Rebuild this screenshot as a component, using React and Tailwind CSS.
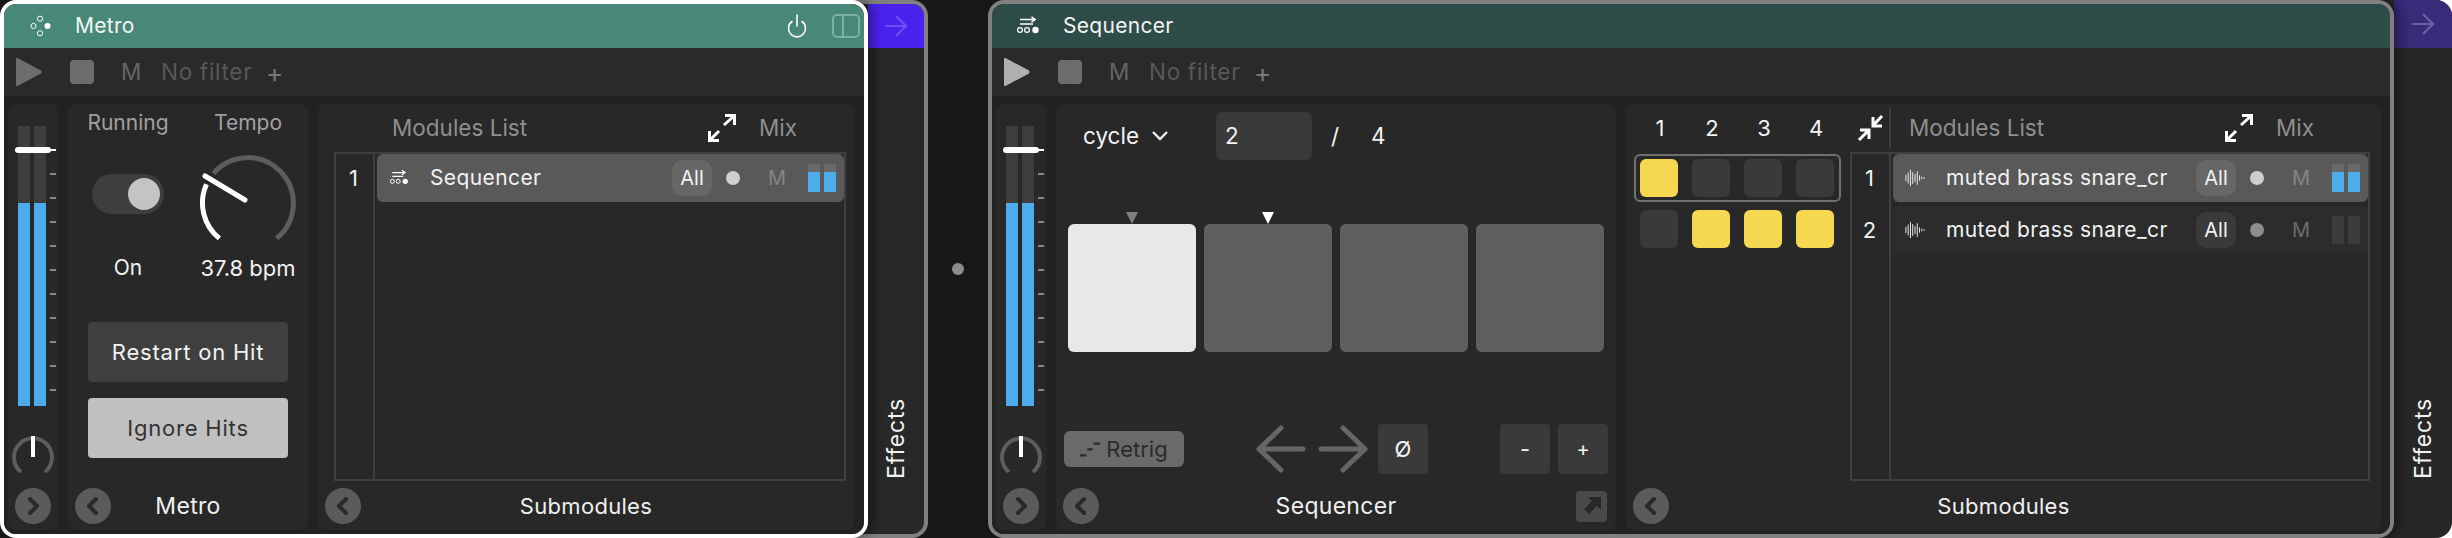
import React from "react";

const Chevron = ({ dir = "left" }) => (
  <div className="flex h-[36px] w-[36px] items-center justify-center rounded-full bg-[#5b5b5b]">
    <svg width="16" height="20" viewBox="0 0 16 20" fill="none" stroke="#2a2a2a" strokeWidth="4" strokeLinecap="round" strokeLinejoin="round">
      {dir === "left" ? <path d="M11 3 L4 10 L11 17" /> : <path d="M5 3 L12 10 L5 17" />}
    </svg>
  </div>
);

const MetroIcon = () => (
  <svg width="24" height="24" viewBox="0 0 24 24" fill="none" stroke="#fff" strokeWidth="1">
    <circle cx="12" cy="4.7" r="2.6" />
    <circle cx="5.5" cy="12" r="2.6" />
    <circle cx="12" cy="19.3" r="2.6" />
    <circle cx="19.5" cy="12" r="3" fill="#fff" stroke="none" />
  </svg>
);

const SeqIcon = ({ w = 24, h = 20 }) => (
  <svg width={w} height={h} viewBox="0 0 24 20" fill="none" stroke="#fff" strokeWidth="1.2">
    <path d="M4 3.5 H19 M15.5 0.8 L19.2 3.5 L15.5 6.2" strokeWidth="1.5" />
    <path d="M4 8 H17" strokeWidth="1.5" />
    <circle cx="4" cy="14" r="2.4" />
    <circle cx="11" cy="14" r="2.4" />
    <circle cx="19.5" cy="14" r="3.2" fill="#fff" stroke="none" />
  </svg>
);

const WaveIcon = () => (
  <svg width="22" height="20" viewBox="0 0 22 20" stroke="#e8e8e8" strokeWidth="1.1" strokeLinecap="round">
    <path d="M1 7 V13 M3.5 4.5 V15.5 M6 1.5 V18.5 M8.5 4 V16 M11 6 V14 M13.5 3 V17 M16 7.5 V12.5 M18.5 9 V11 M21 9.5 V10.5" />
  </svg>
);

const Expand = () => (
  <svg width="30" height="30" viewBox="0 0 30 30" fill="none" stroke="#fff" strokeWidth="3">
    <path d="M17 12 L27 3 M18 2.5 H27.5 V12" />
    <path d="M12 18 L3 27 M2.5 18 V27.5 H12" />
  </svg>
);

const Compress = () => (
  <svg width="28" height="28" viewBox="0 0 28 28" fill="none" stroke="#fff" strokeWidth="3">
    <path d="M25 2 L16.5 11 M16 3 V12 H25" />
    <path d="M2 26 L11 17 M3 16 H12 V25" />
  </svg>
);

const Meter = () => {
  const ticks = Array.from({ length: 11 }, (_, i) => i);
  return (
    <div className="relative ml-[10px] mt-[22px] flex h-[280px]">
      <div className="relative h-full w-[12px] overflow-hidden bg-[#3d3d3d]">
        <div className="mt-[77px] h-[203px] bg-[#4eabec]" />
      </div>
      <div className="relative ml-[4px] h-full w-[12px] overflow-hidden bg-[#3d3d3d]">
        <div className="mt-[77px] h-[203px] bg-[#4eabec]" />
      </div>
      <div className="ml-[4px] flex flex-col gap-[22px] pt-[23px]">
        {ticks.map((t) => (
          <div key={t} className="h-[2px] w-[6px] bg-[#8a8a8a]" />
        ))}
      </div>
      <div className="absolute left-[-3px] top-[21px] h-[6px] w-[36px] rounded-full bg-white" />
      <div className="absolute left-[32px] top-[23px] h-[2px] w-[6px] bg-white" />
    </div>
  );
};

const Mixer = () => (
  <div className="flex h-full w-[50px] shrink-0 flex-col rounded-lg bg-[#282828]">
    <Meter />
    <svg className="ml-[2px] mt-[28px]" width="46" height="46" viewBox="0 0 46 46" fill="none">
      <path d="M11 38 A19 19 0 1 1 35 38" stroke="#5d5d5d" strokeWidth="4" />
      <rect x="21" y="2" width="4" height="21" fill="#fff" />
    </svg>
    <div className="ml-[7px] mt-[8px]">
      <Chevron dir="right" />
    </div>
  </div>
);

const Footer = ({ label, corner, small }) => (
  <div className="mb-[6px] mt-auto grid h-[36px] grid-cols-[1fr_auto_1fr] items-center px-[7px]">
    <Chevron />
    <span className={`tracking-[0.3px] text-[#f0f0f0] ${small ? "text-[22px]" : "text-[23px]"}`}>{label}</span>
    {corner ? (
      <div className="mr-[2px] flex h-[31px] w-[31px] items-center justify-center justify-self-end rounded-[4px] bg-[#4a4a4a]">
        <svg width="22" height="22" viewBox="0 0 22 22" fill="#282828">
          <path d="M7 2 H20 V15 L16 11 L8 19 L3 14 L11 6 Z" />
        </svg>
      </div>
    ) : (
      <span />
    )}
  </div>
);

const Row = ({ icon, name, active, on }) => (
  <div className={`flex h-[48px] items-center rounded-md pl-[12px] pr-[8px] ${active ? "bg-[#595959]" : "bg-[#2c2c2c]"}`}>
    <div className="flex w-[20px] items-center justify-center">{icon}</div>
    <span className="ml-[21px] flex-1 text-[21px] tracking-[0.4px] text-[#f2f2f2]">{name}</span>
    <div className={`flex h-[36px] w-[40px] items-center justify-center rounded-[10px] text-[20px] text-[#f2f2f2] ${active ? "bg-[#676767]" : "bg-[#3a3a3a]"}`}>All</div>
    <div className={`ml-[14px] h-[14px] w-[14px] rounded-full ${active ? "bg-[#cfcfcf]" : "bg-[#8e8e8e]"}`} />
    <span className={`ml-[27px] w-[20px] text-center text-[20px] ${active ? "text-[#858585]" : "text-[#6c6c6c]"}`}>M</span>
    <div className="ml-[21px] flex h-[28px] gap-[4px]">
      {[0, 1].map((i) => (
        <div key={i} className={`h-full w-[12px] ${active ? "bg-[#6a6a6a]" : "bg-[#3c3c3c]"}`}>
          {on && <div className="mt-[8px] h-[20px] bg-[#4eabec]" />}
        </div>
      ))}
    </div>
  </div>
);

const ListGrid = ({ rows }) => (
  <div className="flex h-[329px] border-2 border-[#3f3f3f]">
    <div className="flex w-[39px] shrink-0 flex-col gap-[4px] border-r-2 border-[#3f3f3f]">
      {rows.map((r, i) => (
        <div key={i} className="flex h-[48px] items-center justify-center pr-[2px] text-[22px] text-[#f2f2f2]">{i + 1}</div>
      ))}
    </div>
    <div className="flex flex-1 flex-col gap-[4px] pl-[2px]">{rows}</div>
  </div>
);

const Device = ({ title, icon, left, border, header, play, children, width }) => (
  <div className={`relative z-10 flex h-[538px] shrink-0 flex-col overflow-hidden rounded-[16px] border-4 shadow-[6px_0_10px_rgba(0,0,0,0.35)] ${border} ${width}`}>
    <div className={`flex h-[44px] shrink-0 items-center ${header}`}>
      <div className="ml-[21px] flex w-[29px] justify-center">{icon}</div>
      <span className="ml-[21px] text-[21px] tracking-[0.3px] text-[#f4f4f4]">{title}</span>
      {left && (
        <div className="ml-auto flex items-center">
          <svg width="22" height="26" viewBox="0 0 22 26" fill="none" stroke="#fff" strokeWidth="1.6" strokeLinecap="round">
            <path d="M11 2 V13" />
            <path d="M6 8.5 A8.5 8.5 0 1 0 16 8.5" />
          </svg>
          <svg className="ml-[24px] mr-[4px]" width="28" height="24" viewBox="0 0 28 24" fill="none" stroke="#7db0a4" strokeWidth="2">
            <rect x="1" y="1" width="26" height="22" rx="4" />
            <path d="M11 1 V23" />
          </svg>
        </div>
      )}
    </div>
    <div className="flex h-[48px] shrink-0 items-center bg-[#2a2a2a] text-[22.5px]">
      <svg className="ml-[12px]" width="26" height="30" viewBox="0 0 26 30">
        <path d="M1.5 1 L25 13.5 Q26 15 25 16.5 L1.5 29 Q0 29.5 0 28 V2 Q0 0.5 1.5 1 Z" fill={play} />
      </svg>
      <div className="ml-[28px] h-[24px] w-[24px] rounded-[4px] bg-[#6c6c6c]" />
      <span className="ml-[27px] w-[20px] text-center text-[#666]">M</span>
      <span className="ml-[20px] w-[90px] whitespace-nowrap tracking-[0.7px] text-[#585858]">No filter</span>
      <span className="ml-[15px] text-[26px] text-[#787878]">+</span>
    </div>
    <div className="flex min-h-0 flex-1 gap-[10px] bg-[#222222] px-[4px] py-[8px] pb-[4px]">{children}</div>
  </div>
);

const EffectsTab = ({ first }) => (
  <div className={`flex h-[538px] shrink-0 flex-col overflow-hidden rounded-r-[16px] pl-[14px] ${first ? "-ml-[14px] w-[74px] border-4 border-l-0 border-[#808080] bg-[#282828]" : "w-[72px] bg-[#272727]"}`}>
    <div className={`flex shrink-0 items-center justify-center ${first ? "h-[44px] bg-[#4a22ee]" : "h-[48px] bg-[#392a7a]"}`}>
      <svg width="24" height="26" viewBox="0 0 24 26" fill="none" stroke={first ? "#6e4ff2" : "#6d60a6"} strokeWidth="2.2">
        <path d="M1 13 H22 M12 3 L22 13 L12 23" />
      </svg>
    </div>
    <div className="flex flex-1 justify-center">
      <span className="mt-[350px] rotate-180 self-start whitespace-nowrap text-[23px] tracking-[0.8px] text-[#f2f2f2] [writing-mode:vertical-rl]">Effects</span>
    </div>
  </div>
);

const MetroMain = () => (
  <div className="flex h-full w-[240px] shrink-0 flex-col rounded-lg bg-[#282828]">
    <div className="mt-[7px] grid grid-cols-2 justify-items-center text-[21px]">
      <div className="flex flex-col items-center">
        <span className="h-[24px] leading-[24px] text-[#a0a0a0]">Running</span>
        <div className="mt-[39px] flex h-[40px] w-[72px] items-center justify-end rounded-full bg-[#3e3e3e] pr-[4px]">
          <div className="h-[32px] w-[32px] rounded-full bg-[#c4c4c4]" />
        </div>
        <span className="mt-[42px] h-[24px] leading-[24px] text-[#f2f2f2]">On</span>
      </div>
      <div className="flex flex-col items-center">
        <span className="h-[24px] leading-[24px] text-[#a0a0a0]">Tempo</span>
        <svg className="mt-[18px]" width="100" height="100" viewBox="0 0 100 100" fill="none" strokeWidth="5">
          <path d="M21.4 85.4 A45.5 45.5 0 0 1 8.5 31.3" stroke="#fff" />
          <path d="M15.5 20.3 A45.5 45.5 0 1 1 78.6 85.4" stroke="#5d5d5d" />
          <path d="M7 23 L47 47" stroke="#fff" strokeLinecap="round" />
        </svg>
        <span className="mt-[3px] h-[24px] whitespace-nowrap text-[22px] leading-[24px] text-[#f2f2f2]">37.8 bpm</span>
      </div>
    </div>
    <div className="mx-auto mt-[42px] flex w-[200px] flex-col gap-[16px] text-[22px] tracking-[0.8px]">
      <div className="flex h-[60px] items-center justify-center rounded-[4px] bg-[#3f3f3f] text-[#f2f2f2]">Restart on Hit</div>
      <div className="flex h-[60px] items-center justify-center rounded-[4px] bg-[#c0c0c0] text-[#333]">Ignore Hits</div>
    </div>
    <Footer label="Metro" />
  </div>
);

const SeqMain = () => (
  <div className="flex h-full w-[560px] shrink-0 flex-col rounded-lg bg-[#282828] text-[#f2f2f2]">
    <div className="mt-[8px] flex h-[48px] items-center pl-[27px] text-[22.5px]">
      <span className="w-[56px]">cycle</span>
      <svg className="ml-[12px]" width="18" height="12" viewBox="0 0 18 12" fill="none" stroke="#f2f2f2" strokeWidth="2.4">
        <path d="M2 2 L9 9 L16 2" />
      </svg>
      <div className="ml-[47px] flex h-[48px] w-[96px] items-center rounded-md bg-[#3a3a3a] pl-[9px]">2</div>
      <span className="ml-[17px] w-[12px] text-center">/</span>
      <span className="ml-[30px]">4</span>
    </div>
    <div className="mt-[52px] grid grid-cols-4 gap-[8px] px-[12px]">
      {[0, 1, 2, 3].map((i) => (
        <div key={i} className="flex h-[12px] justify-center">
          {i < 2 && (
            <svg width="12" height="12" viewBox="0 0 12 12">
              <path d="M0 0 H12 L6 12 Z" fill={i === 0 ? "#808080" : "#fff"} />
            </svg>
          )}
        </div>
      ))}
    </div>
    <div className="grid grid-cols-4 gap-[8px] px-[12px]">
      {[0, 1, 2, 3].map((i) => (
        <div key={i} className={`h-[128px] rounded-md ${i === 0 ? "bg-[#e8e8e8]" : "bg-[#5f5f61]"}`} />
      ))}
    </div>
    <div className="mt-[72px] flex h-[50px] items-center px-[8px]">
      <div className="flex h-[36px] w-[120px] items-center justify-center gap-[6px] rounded-md bg-[#6a6a6a] text-[22px] text-[#2c2c2c]">
        <svg width="20" height="18" viewBox="0 0 22 18" stroke="#2c2c2c" strokeWidth="2.4">
          <path d="M0 16 H7 M8 9.5 H14 M15 3 H22" />
        </svg>
        Retrig
      </div>
      <svg className="ml-[72px]" width="50" height="48" viewBox="0 0 50 48" fill="none" stroke="#666" strokeWidth="5" strokeLinecap="round" strokeLinejoin="round">
        <path d="M47 24 H3 M25 3 L3 24 L25 45" />
      </svg>
      <svg className="ml-[12px]" width="50" height="48" viewBox="0 0 50 48" fill="none" stroke="#666" strokeWidth="5" strokeLinecap="round" strokeLinejoin="round">
        <path d="M3 24 H47 M25 3 L47 24 L25 45" />
      </svg>
      <div className="ml-[10px] flex h-[50px] w-[50px] items-center justify-center rounded-[4px] bg-[#3a3a3a] text-[22px]">Ø</div>
      <div className="ml-auto flex h-[50px] w-[50px] items-center justify-center rounded-[4px] bg-[#3a3a3a] text-[22px]">-</div>
      <div className="ml-[8px] flex h-[50px] w-[50px] items-center justify-center rounded-[4px] bg-[#3a3a3a] text-[20px]">+</div>
    </div>
    <Footer label="Sequencer" corner />
  </div>
);

const ListHeader = ({ mixWidth, gutter }) => (
  <div className="flex h-[48px] items-center text-[22.5px] text-[#8f8f8f]">
    {gutter}
    <span className="whitespace-nowrap">Modules List</span>
    <div className="ml-auto flex items-center">
      <Expand />
      <span className={`ml-[22px] ${mixWidth}`}>Mix</span>
    </div>
  </div>
);

const MetroModules = () => (
  <div className="flex h-full w-[536px] shrink-0 flex-col rounded-lg bg-[#282828] pl-[16px] pr-[8px]">
    <ListHeader mixWidth="w-[87px]" gutter={<span className="w-[58px]" />} />
    <ListGrid rows={[<Row key="a" active on icon={<SeqIcon w={22} h={18} />} name="Sequencer" />]} />
    <div className="-ml-[16px] -mr-[8px] mt-auto">
      <Footer label="Submodules" small />
    </div>
  </div>
);

const Pad = ({ on }) => <div className={`h-[38px] w-[38px] rounded-md ${on ? "bg-[#f5d84f]" : "bg-[#3a3a3a]"}`} />;

const SeqModules = () => (
  <div className="flex h-full w-[755px] shrink-0 flex-col rounded-lg bg-[#282828]">
    <div className="flex">
      <div className="w-[224px] shrink-0 pl-[8px]">
        <div className="flex h-[48px] items-center text-[22px] text-[#f2f2f2]">
          {[1, 2, 3, 4].map((n) => (
            <span key={n} className="w-[52px] text-center">{n}</span>
          ))}
        </div>
        <div className="mt-[2px] flex h-[48px] w-[207px] items-center gap-[14px] rounded-md border-2 border-[#707070] pl-[4px]">
          <Pad on /><Pad /><Pad /><Pad />
        </div>
        <div className="ml-[6px] mt-[8px] flex gap-[14px]">
          <Pad /><Pad on /><Pad on /><Pad on />
        </div>
      </div>
      <div className="w-[520px] shrink-0">
        <ListHeader
          mixWidth="w-[94px]"
          gutter={
            <div className="mr-[18px] flex h-[40px] w-[41px] shrink-0 items-center border-r-2 border-[#3f3f3f] pl-[7px]">
              <Compress />
            </div>
          }
        />
        <ListGrid
          rows={[
            <Row key="a" active on icon={<WaveIcon />} name="muted brass snare_cr" />,
            <Row key="b" icon={<WaveIcon />} name="muted brass snare_cr" />,
          ]}
        />
      </div>
    </div>
    <div className="mt-auto">
      <Footer label="Submodules" small />
    </div>
  </div>
);

export default function App() {
  return (
    <div className="flex h-[538px] w-[2452px] overflow-hidden bg-[#181818] [font-family:Inter,sans-serif]">
      <Device width="w-[868px]" left title="Metro" icon={<MetroIcon />} border="border-white" header="bg-[#478878]" play="#6e6e6e">
        <Mixer />
        <MetroMain />
        <MetroModules />
      </Device>
      <EffectsTab first />
      <div className="flex w-[60px] shrink-0 items-center justify-center">
        <div className="h-[12px] w-[12px] rounded-full bg-[#8c8c8c]" />
      </div>
      <Device width="w-[1406px]" title="Sequencer" icon={<SeqIcon />} border="border-[#808080]" header="bg-[#2f4d48]" play="#b0b0b0">
        <Mixer />
        <SeqMain />
        <SeqModules />
      </Device>
      <div className="-ml-[14px] shrink-0 bg-white">
        <EffectsTab />
      </div>
    </div>
  );
}
